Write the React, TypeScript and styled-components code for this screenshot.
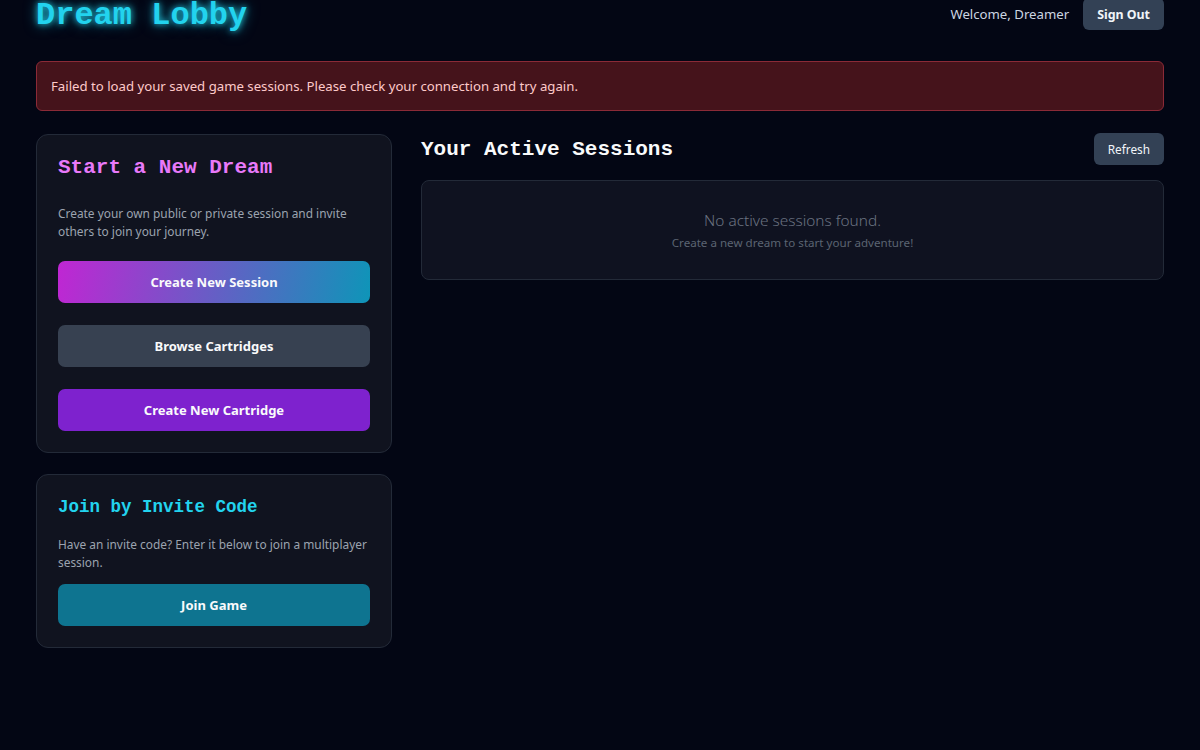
import React from "react";
import styled, { createGlobalStyle } from "styled-components";

const GlobalStyle = createGlobalStyle`
    html, body {
        margin: 0;
        padding: 0;
        background: #030614;
        color: #e5e7eb;
        font-family: "Segoe UI", "Noto Sans", "Open Sans", sans-serif;
        overflow: hidden;
    }
    * { box-sizing: border-box; }
`;

const Page = styled.div`
    width: 1200px;
    height: 750px;
    padding: 0 36px;
`;

const Header = styled.header`
    display: flex;
    align-items: center;
    justify-content: space-between;
    height: 34px;
    margin-top: -3px;
`;

const Title = styled.h1`
    margin: 0;
    padding-top: 4px;
    font-family: "Liberation Mono", "Courier New", monospace;
    font-size: 32px;
    font-weight: 700;
    line-height: 34px;
    color: #22d3ee;
    text-shadow: 0 0 6px rgba(34, 211, 238, 0.9), 0 0 14px rgba(34, 211, 238, 0.6);
`;

const UserArea = styled.div`
    display: flex;
    align-items: center;
    gap: 14px;
`;

const Welcome = styled.span`
    font-size: 13.2px;
    color: #cbd5e1;
`;

const SmallButton = styled.button<{ $bold?: boolean }>`
    border: none;
    border-radius: 6px;
    background: #334155;
    color: #f1f5f9;
    font-family: inherit;
    font-size: ${p => (p.$bold ? 12.4 : 11.8)}px;
    font-weight: ${p => (p.$bold ? 700 : 400)};
    height: 32px;
    padding: 0 14px;
`;

const ErrorBanner = styled.div`
    margin-top: 30px;
    height: 50px;
    display: flex;
    align-items: center;
    padding: 0 14px;
    border: 1px solid #8b2a37;
    border-radius: 6px;
    background: #45131b;
    color: #fecaca;
    font-size: 13.2px;
`;

const Grid = styled.div`
    display: grid;
    grid-template-columns: 356px 1fr;
    gap: 29px;
    margin-top: 23px;
    align-items: start;
`;

const Column = styled.div`
    display: flex;
    flex-direction: column;
    gap: 21px;
`;

const Card = styled.section`
    background: #10131f;
    border: 1px solid #232a38;
    border-radius: 12px;
    padding: 21px;
    display: flex;
    flex-direction: column;
`;

const CardTitle = styled.h2<{ $color: string; $size: number; $line: number; $gap: number }>`
    margin: 0 0 ${p => p.$gap}px;
    font-family: "Liberation Mono", "Courier New", monospace;
    font-weight: 700;
    font-size: ${p => p.$size}px;
    line-height: ${p => p.$line}px;
    color: ${p => p.$color};
`;

const CardText = styled.p<{ $gap: number }>`
    margin: 0 0 ${p => p.$gap}px;
    font-size: 11.9px;
    line-height: 18px;
    color: #9ca3af;
`;

const ActionButton = styled.button<{ $bg: string }>`
    height: 42px;
    width: 100%;
    border: none;
    border-radius: 7px;
    background: ${p => p.$bg};
    color: #f9fafb;
    font-family: inherit;
    font-size: 13px;
    font-weight: 700;
`;

const ButtonStack = styled.div`
    display: flex;
    flex-direction: column;
    gap: 22px;
`;

const SectionHead = styled.div`
    display: flex;
    align-items: center;
    justify-content: space-between;
    height: 32px;
    margin-top: -1px;
`;

const SectionTitle = styled.h2`
    margin: 0;
    font-family: "Liberation Mono", "Courier New", monospace;
    font-weight: 700;
    font-size: 21px;
    color: #f9fafb;
`;

const EmptyBox = styled.div`
    margin-top: 15px;
    height: 100px;
    border: 1px solid #232a38;
    border-radius: 8px;
    background: #0f1220;
    padding-top: 29px;
    text-align: center;
`;

const EmptyTitle = styled.div`
    font-size: 15.4px;
    line-height: 22px;
    color: #6b7280;
    font-weight: 300;
`;

const EmptySub = styled.div`
    margin-top: 2px;
    font-size: 11.6px;
    line-height: 18px;
    color: #5b6472;
`;

export default function App() {
    return (
        <Page>
            <GlobalStyle />
            <Header>
                <Title>Dream Lobby</Title>
                <UserArea>
                    <Welcome>Welcome, Dreamer</Welcome>
                    <SmallButton $bold>Sign Out</SmallButton>
                </UserArea>
            </Header>
            <ErrorBanner>
                Failed to load your saved game sessions. Please check your connection and try again.
            </ErrorBanner>
            <Grid>
                <Column>
                    <Card>
                        <CardTitle $color="#e879f9" $size={21} $line={24} $gap={24}>Start a New Dream</CardTitle>
                        <CardText $gap={21}>
                            Create your own public or private session and invite others to join your journey.
                        </CardText>
                        <ButtonStack>
                            <ActionButton $bg="linear-gradient(100deg, #c026d3 0%, #0e95b8 100%)">Create New Session</ActionButton>
                            <ActionButton $bg="#374151">Browse Cartridges</ActionButton>
                            <ActionButton $bg="#7e22ce">Create New Cartridge</ActionButton>
                        </ButtonStack>
                    </Card>
                    <Card>
                        <CardTitle $color="#22d3ee" $size={17.5} $line={22} $gap={17}>Join by Invite Code</CardTitle>
                        <CardText $gap={13}>
                            Have an invite code? Enter it below to join a multiplayer session.
                        </CardText>
                        <ActionButton $bg="#0e7490">Join Game</ActionButton>
                    </Card>
                </Column>
                <div>
                    <SectionHead>
                        <SectionTitle>Your Active Sessions</SectionTitle>
                        <SmallButton>Refresh</SmallButton>
                    </SectionHead>
                    <EmptyBox>
                        <EmptyTitle>No active sessions found.</EmptyTitle>
                        <EmptySub>Create a new dream to start your adventure!</EmptySub>
                    </EmptyBox>
                </div>
            </Grid>
        </Page>
    );
}
